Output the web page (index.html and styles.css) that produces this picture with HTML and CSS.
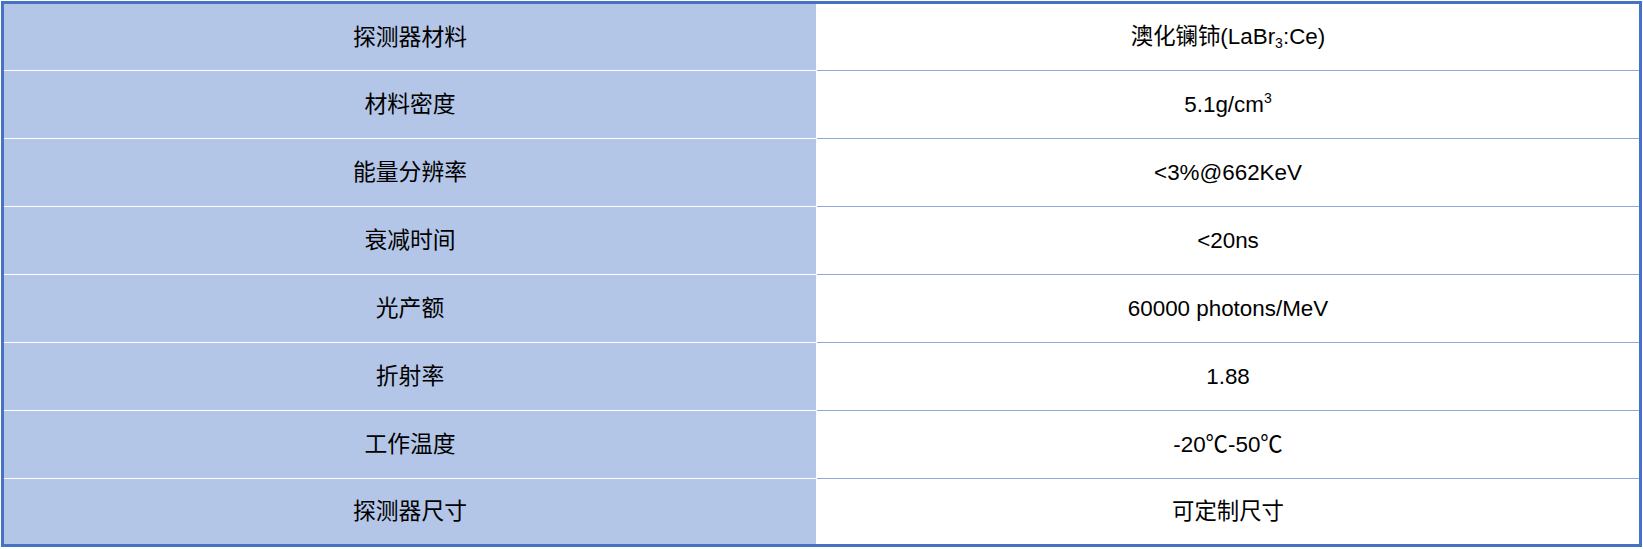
FILE: index.html
```html
<!DOCTYPE html>
<html lang="zh">
<head>
<meta charset="utf-8">
<link rel="stylesheet" href="styles.css">
</head>
<body>
<div class="spec">
  <div class="row"><div class="key"><span>探测器材料</span></div><div class="val"><span>澳化镧铈(LaBr<sub>3</sub>:Ce)</span></div></div>
  <div class="row"><div class="key"><span>材料密度</span></div><div class="val"><span>5.1g/cm<sup>3</sup></span></div></div>
  <div class="row"><div class="key"><span>能量分辨率</span></div><div class="val"><span>&lt;3%@662KeV</span></div></div>
  <div class="row"><div class="key"><span>衰减时间</span></div><div class="val"><span>&lt;20ns</span></div></div>
  <div class="row"><div class="key"><span>光产额</span></div><div class="val"><span>60000 photons/MeV</span></div></div>
  <div class="row"><div class="key"><span>折射率</span></div><div class="val"><span>1.88</span></div></div>
  <div class="row"><div class="key"><span>工作温度</span></div><div class="val"><span>-20℃-50℃</span></div></div>
  <div class="row last"><div class="key"><span>探测器尺寸</span></div><div class="val"><span>可定制尺寸</span></div></div>
</div>
</body>
</html>
```
FILE: styles.css
```css
html, body {
  margin: 0;
  padding: 0;
  background: #ffffff;
}
body {
  padding: 1px 0 0 1px;
  font-family: "Liberation Sans", Arial, "Noto Sans CJK SC", sans-serif;
  font-size: 22.4px;
  color: #000000;
}
.spec {
  width: 1635px;
  border: 3px solid #4472c4;
  display: flex;
  flex-direction: column;
  background: #ffffff;
}
.row {
  display: flex;
  height: 68px;
  gap: 1px;
}
.row:first-child {
  height: 67px;
}
.row.last {
  height: 65px;
}
.key, .val {
  display: flex;
  align-items: center;
  justify-content: center;
  box-sizing: border-box;
  padding-top: 1px;
  line-height: 1.2;
}
.key {
  width: 812px;
  background: #b4c6e7;
  border-bottom: 1px solid #ffffff;
  font-size: 22.8px;
}
.val {
  width: 822px;
  background: #ffffff;
  border-bottom: 1px solid #8eaadb;
}
.row.last .key, .row.last .val {
  border-bottom: none;
}
sub, sup {
  font-size: 14px;
  line-height: 0;
  vertical-align: baseline;
  position: relative;
}
sub {
  top: 4px;
}
sup {
  top: -9px;
}
```
